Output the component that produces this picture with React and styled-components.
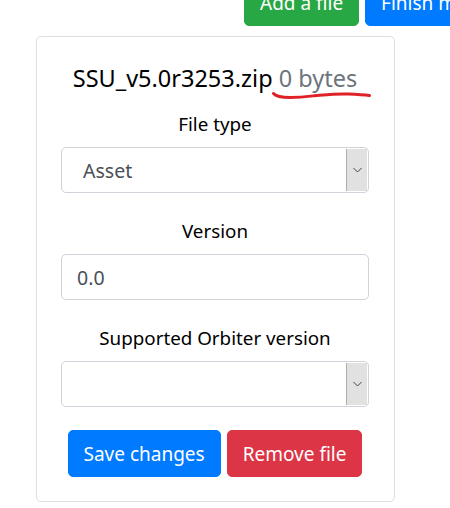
import React from "react";
import styled, { createGlobalStyle } from "styled-components";

const GlobalStyle = createGlobalStyle`
  body {
    margin: 0;
    background: #fff;
    font-family: "Noto Sans", "Open Sans", sans-serif;
    color: #212529;
    overflow: hidden;
  }
`;

const Page = styled.div`
  width: 450px;
  height: 508px;
  overflow: hidden;
`;

const Toolbar = styled.div`
  display: flex;
  gap: 6px;
  margin-top: -21px;
  padding-left: 244px;
  white-space: nowrap;
`;

const Button = styled.button`
  flex: none;
  font-family: inherit;
  font-size: 19px;
  line-height: 30px;
  padding: 7.5px 15px;
  border: 1px solid ${(p) => p.$bg};
  border-radius: 5px;
  background: ${(p) => p.$bg};
  color: #fff;
  cursor: pointer;
`;

const Card = styled.div`
  box-sizing: border-box;
  width: 359px;
  height: 466px;
  margin: 10px 0 0 36px;
  border: 1px solid #dfdfdf;
  border-radius: 5px;
  padding: 27px 25px 0 24px;
  display: flex;
  flex-direction: column;
  align-items: stretch;
`;

const Title = styled.h2`
  margin: 0 0 16px;
  font-weight: 400;
  font-size: 23.5px;
  line-height: 29px;
  text-align: center;
  color: #000;
  white-space: nowrap;
`;

const Muted = styled.span`
  position: relative;
  color: #6c757d;
`;

const Scribble = styled.svg`
  position: absolute;
  left: -7px;
  top: 30px;
  overflow: visible;
`;

const Label = styled.label`
  display: block;
  font-size: 18.8px;
  line-height: 30px;
  text-align: center;
  color: #000;
  margin-bottom: 8px;
`;

const Field = styled.div`
  margin-bottom: 23px;
`;

const SelectBox = styled.div`
  box-sizing: border-box;
  height: 46px;
  border: 1px solid #ced4da;
  border-radius: 5px;
  display: flex;
  align-items: stretch;
  background: #fff;
  overflow: hidden;
`;

const SelectText = styled.div`
  flex: 1;
  padding-left: 21px;
  font-size: 19.5px;
  line-height: 46px;
  color: #495057;
`;

const Arrow = styled.div`
  width: 20px;
  margin: 1px 1px 1px 0;
  background: #e1e1e1;
  border-left: 1px solid #adadad;
  display: flex;
  align-items: center;
  justify-content: center;
`;

const Input = styled.input`
  box-sizing: border-box;
  display: block;
  width: 100%;
  height: 46px;
  border: 1px solid #ced4da;
  border-radius: 5px;
  padding: 0 15px;
  font-family: inherit;
  font-size: 19.5px;
  color: #495057;
  outline: none;
`;

const Actions = styled.div`
  display: flex;
  justify-content: center;
  gap: 6px;
`;

function Select({ value }) {
  return (
    <SelectBox>
      <SelectText>{value}</SelectText>
      <Arrow>
        <svg width="9" height="6" viewBox="0 0 9 6">
          <path d="M0.5 1 L4.5 5 L8.5 1" fill="none" stroke="#444" strokeWidth="1" />
        </svg>
      </Arrow>
    </SelectBox>
  );
}

export default function App() {
  return (
    <Page>
      <GlobalStyle />
      <Toolbar>
        <Button $bg="#28a745">Add a file</Button>
        <Button $bg="#007bff">Finish modifications</Button>
      </Toolbar>
      <Card>
        <Title>
          SSU_v5.0r3253.zip{" "}
          <Muted>
            0 bytes
            <Scribble width="100" height="8" viewBox="0 0 100 8">
              <path
                d="M1.5 1.5 C4 4.5 8 5.5 18 5.5 C30 5.5 36 4.5 44 3.5 C56 2.5 66 1.5 76 2 C86 2.5 93 3 97.5 3.5"
                fill="none"
                stroke="#e02128"
                strokeWidth="3"
                strokeLinecap="round"
              />
            </Scribble>
          </Muted>
        </Title>
        <Field>
          <Label>File type</Label>
          <Select value="Asset" />
        </Field>
        <Field>
          <Label>Version</Label>
          <Input defaultValue="0.0" />
        </Field>
        <Field>
          <Label>Supported Orbiter version</Label>
          <Select value="" />
        </Field>
        <Actions>
          <Button $bg="#007bff">Save changes</Button>
          <Button $bg="#dc3545">Remove file</Button>
        </Actions>
      </Card>
    </Page>
  );
}
